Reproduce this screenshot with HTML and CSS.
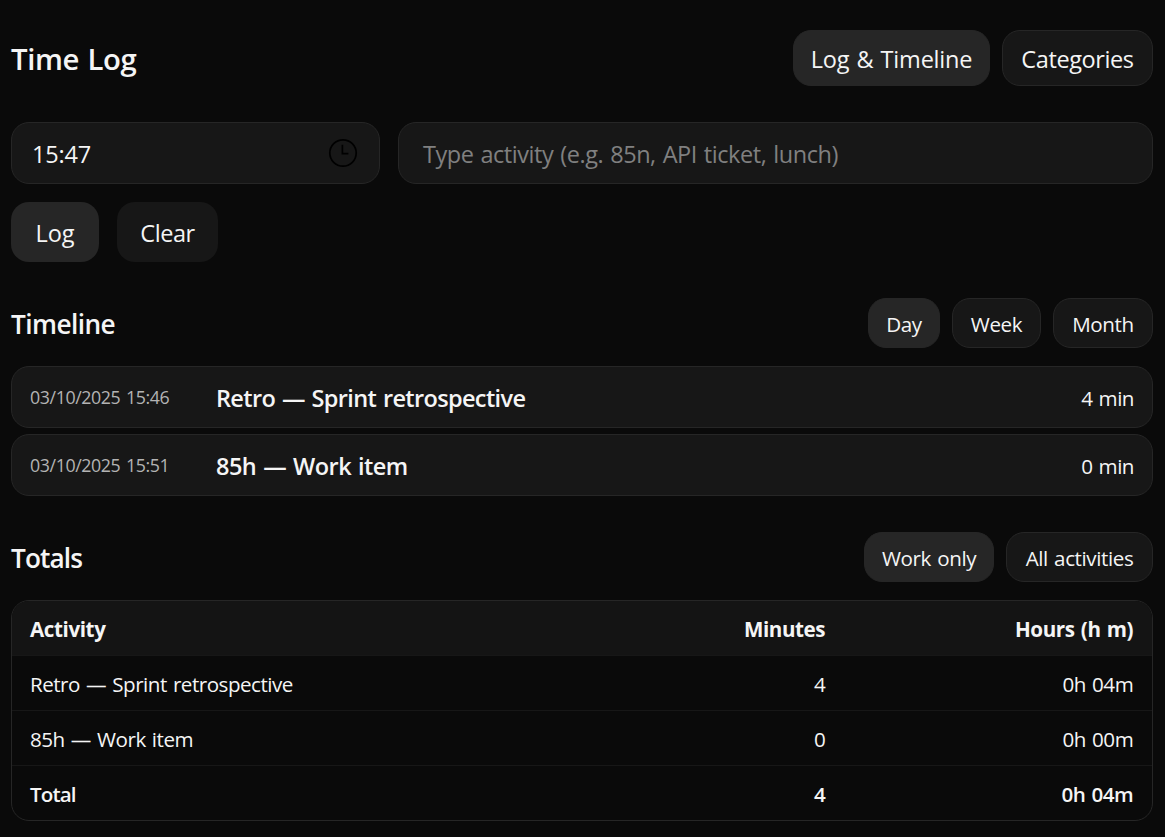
FILE: index.html
```html
<!DOCTYPE html>
<html lang="en">
<head>
<meta charset="utf-8">
<title>Time Log</title>
<link rel="stylesheet" href="styles.css">
</head>
<body>
<main class="app">
  <header class="header">
    <h1 class="title">Time Log</h1>
    <nav class="group">
      <button class="tab tab-log active">Log &amp; Timeline</button>
      <button class="tab tab-categories">Categories</button>
    </nav>
  </header>

  <section class="entry">
    <div class="field time-field">
      <span class="time-value">15:47</span>
      <svg class="clock" viewBox="0 0 30 30" fill="none" stroke="#000" stroke-width="1.7"><circle cx="15" cy="15" r="13.2"/><path d="M14.4 6.8v8.9h6"/></svg>
    </div>
    <div class="field activity-field"><span class="placeholder">Type activity (e.g. 85n, API ticket, lunch)</span></div>
  </section>
  <div class="actions">
    <button class="action action-log">Log</button>
    <button class="action action-clear">Clear</button>
  </div>

  <section class="section">
    <div class="section-head">
      <h2 class="subtitle subtitle-timeline">Timeline</h2>
      <div class="group">
        <button class="pill pill-day active">Day</button>
        <button class="pill pill-week">Week</button>
        <button class="pill pill-month">Month</button>
      </div>
    </div>
    <div class="timeline">
      <article class="event"><time class="event-time">03/10/2025 15:46</time><strong class="event-name event-retro">Retro — Sprint retrospective</strong><span class="event-length">4 min</span></article>
      <article class="event"><time class="event-time">03/10/2025 15:51</time><strong class="event-name">85h — Work item</strong><span class="event-length">0 min</span></article>
    </div>
  </section>

  <section class="section">
    <div class="section-head">
      <h2 class="subtitle subtitle-totals">Totals</h2>
      <div class="group">
        <button class="pill pill-work active">Work only</button>
        <button class="pill pill-all">All activities</button>
      </div>
    </div>
    <div class="table">
      <div class="row row-head"><span>Activity</span><span class="num">Minutes</span><span class="num">Hours (h m)</span></div>
      <div class="row"><span class="name-retro">Retro — Sprint retrospective</span><span class="num">4</span><span class="num">0h 04m</span></div>
      <div class="row"><span>85h — Work item</span><span class="num">0</span><span class="num">0h 00m</span></div>
      <div class="row row-total"><span class="total-label">Total</span><span class="num">4</span><span class="num">0h 04m</span></div>
    </div>
  </section>
</main>
</body>
</html>
```
FILE: styles.css
```css
* { box-sizing: border-box; }
body {
  margin: 0;
  background: #0a0a0a;
  color: #f5f5f5;
  font-family: "Open Sans", "Noto Sans", sans-serif;
  font-size: 23.5px;
  word-spacing: 1.3px;
  overflow: hidden;
}
h1, h2 { margin: 0; font-weight: 600; }
button { font: inherit; color: inherit; word-spacing: inherit; margin: 0; padding: 0; white-space: nowrap; }
.app { padding: 30px 12px 0 11px; }
.header, .section-head { display: flex; align-items: center; justify-content: space-between; }
.header { height: 56px; }
.title { font-size: 29.3px; letter-spacing: -0.4px; padding-top: 1px; }
.group { display: flex; gap: 12px; }
.tab, .pill { background: #171717; border: 1px solid #262626; border-radius: 18px; }
.group .active { background: #262626; }
.tab { height: 56px; padding-top: 1px; letter-spacing: -0.4px; }
.tab-log { width: 197px; letter-spacing: -0.2px; }
.tab-categories { width: 151px; }

.entry { display: grid; grid-template-columns: 369px 1fr; gap: 18px; margin-top: 36px; }
.field {
  display: flex;
  align-items: center;
  justify-content: space-between;
  height: 62px;
  background: #171717;
  border: 1px solid #262626;
  border-radius: 18px;
}
.time-field { padding: 0 21px 0 20px; }
.time-value { padding-top: 1px; letter-spacing: -0.2px; }
.clock { width: 30px; height: 30px; }
.activity-field { padding: 0 24px; }
.placeholder { color: #808080; padding-top: 1px; letter-spacing: -0.45px; white-space: nowrap; }

.actions { display: flex; gap: 18px; margin-top: 18px; }
.action { height: 60px; padding-top: 1px; border: 0; border-radius: 18px; letter-spacing: -0.45px; }
.action-log { width: 88px; background: #262626; letter-spacing: -0.1px; }
.action-clear { width: 101px; background: #171717; }

.section { margin-top: 36px; }
.section-head { height: 50px; margin-bottom: 18px; }
.subtitle { font-size: 26.2px; letter-spacing: -0.55px; padding-top: 2px; }
.subtitle-totals { letter-spacing: -0.9px; }
.pill { height: 50px; padding-top: 1px; font-size: 20.6px; letter-spacing: -0.4px; }
.pill-day { width: 72px; }
.pill-week { width: 89px; }
.pill-month { width: 100px; }
.pill-work { width: 130px; }
.pill-all { width: 147px; }

.timeline { display: grid; gap: 6px; }
.event {
  display: grid;
  grid-template-columns: 168px 1fr auto;
  column-gap: 18px;
  align-items: center;
  height: 62px;
  padding: 0 18px;
  background: #171717;
  border: 1px solid #262626;
  border-radius: 18px;
}
.event-time { font-size: 17.8px; color: #b3b3b3; letter-spacing: -0.4px; }
.event-name { font-weight: 600; padding-top: 1px; letter-spacing: -0.52px; }
.event-retro { letter-spacing: -0.64px; }
.event-length { font-size: 20.6px; padding-top: 2px; letter-spacing: -0.5px; }

.table { border: 1px solid #262626; border-radius: 18px; overflow: hidden; }
.row {
  display: grid;
  grid-template-columns: 506px 326px 308px;
  align-items: center;
  height: 55px;
  border-top: 1px solid #171717;
  font-size: 20.6px;
  letter-spacing: -0.5px;
}
.row span { padding: 1px 18px 0; white-space: nowrap; }
.row .num { text-align: right; padding-right: 18.8px; }
.row-head { height: 54px; background: #141414; border-top: 0; font-weight: 700; letter-spacing: -0.4px; }
.row-total { font-weight: 600; }
.row .total-label { letter-spacing: -0.9px; }
```
